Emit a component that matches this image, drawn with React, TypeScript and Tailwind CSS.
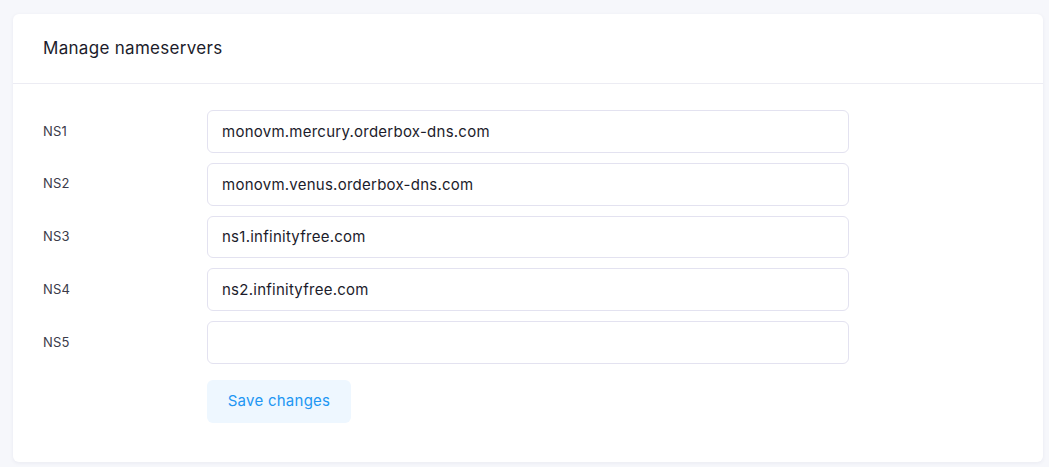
import React from 'react';

const servers = [
  { label: 'NS1', value: 'monovm.mercury.orderbox-dns.com' },
  { label: 'NS2', value: 'monovm.venus.orderbox-dns.com' },
  { label: 'NS3', value: 'ns1.infinityfree.com' },
  { label: 'NS4', value: 'ns2.infinityfree.com' },
  { label: 'NS5', value: '' },
];

const App: React.FC = () => {
  return (
    <div
      className="min-h-[467px] bg-[#f6f7fb] pt-[14px] pl-[13px]"
      style={{ fontFamily: 'Inter, "Open Sans", sans-serif' }}
    >
      <div className="w-[1030px] h-[448px] bg-white rounded-[6px] shadow-[0_1px_4px_rgba(40,40,90,0.06)]">
        {/* Header */}
        <div className="h-[70px] border-b border-[#ececf3] px-[30px] flex items-center">
          <h2 className="text-[17px] text-[#1c1c2b] font-normal tracking-[0.3px]">Manage nameservers</h2>
        </div>

        {/* Form */}
        <div className="pt-[26px] px-[30px]">
          <div className="flex flex-col gap-[10px]">
            {servers.map((ns) => (
              <div key={ns.label} className="flex items-center">
                <label className="w-[164px] text-[13px] text-[#3b3b4a] tracking-[0.2px]">{ns.label}</label>
                <input
                  readOnly
                  value={ns.value}
                  className="w-[642px] h-[42.75px] rounded-[6px] border border-[#e3e2f0] px-[14px] text-[15px] text-[#1c1c2b] tracking-[0.25px] outline-none"
                />
              </div>
            ))}
          </div>
          <div className="pl-[164px] mt-[16px]">
            <button className="w-[144px] h-[43px] rounded-[6px] bg-[#eef7ff] text-[15px] text-[#2196f3] tracking-[0.25px]">
              Save changes
            </button>
          </div>
        </div>
      </div>
    </div>
  );
};

export default App;
